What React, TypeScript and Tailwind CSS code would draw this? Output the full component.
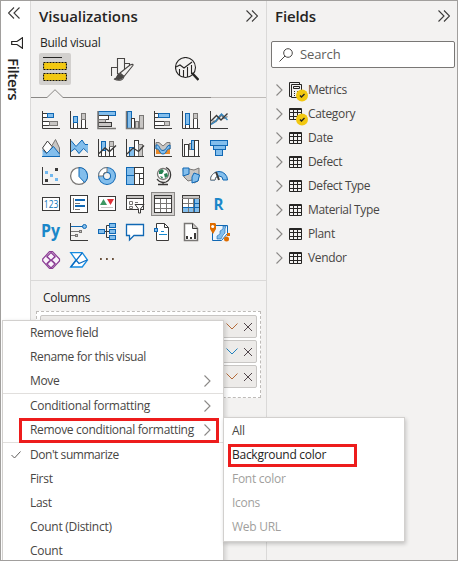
import React from "react";

const D = "#3b3a39";
const B = "#1068b4";
const L = "#83beec";
const G = "#c8c6c4";
const M = "#797775";

function Axis() {
  return <path d="M.5 0V17.5H18" fill="none" stroke={D} />;
}

type ShapeProps = { x: number; y: number; w: number; h: number; f?: string; s?: string };
function Box({ x, y, w, h, f = "#fff", s = D }: ShapeProps) {
  return <rect x={x} y={y} width={w} height={h} fill={f} stroke={s} />;
}

const visuals: { name: string; art: React.ReactNode }[] = [
  { name: "stacked bar", art: <><Box x={0.5} y={2.5} w={5} h={4} /><Box x={5.5} y={2.5} w={6} h={4} f={L} s={B} /><Box x={0.5} y={10.5} w={7} h={4} /><Box x={7.5} y={10.5} w={8} h={4} f={G} s={M} /><Axis /></> },
  { name: "stacked column", art: <><Box x={3.5} y={11.5} w={4} h={6} /><Box x={3.5} y={5.5} w={4} h={6} f={L} s={B} /><Box x={11.5} y={8.5} w={4} h={9} /><Box x={11.5} y={2.5} w={4} h={6} f={G} s={M} /><Axis /></> },
  { name: "clustered bar", art: <><Box x={0.5} y={0.5} w={17} h={4} f={L} s={B} /><Box x={0.5} y={4.5} w={10} h={4} /><Box x={0.5} y={8.5} w={7} h={3} f={G} s={M} /><Box x={0.5} y={11.5} w={13} h={4} f={G} /><path d="M0 0V17.5H18" fill="none" stroke={M} strokeWidth="1.5" /></> },
  { name: "clustered column", art: <><Box x={1.5} y={0.5} w={4} h={17} f={L} s={B} /><Box x={5.5} y={7.5} w={3} h={10} /><Box x={9.5} y={10.5} w={3} h={7} f={G} s={M} /><Box x={13.5} y={4.5} w={4} h={13} f={G} s={M} /><path d="M.5 0V17.5H18" fill="none" stroke={M} strokeWidth="1.5" /></> },
  { name: "100% stacked bar", art: <><Box x={0.5} y={2.5} w={4} h={4} /><Box x={4.5} y={2.5} w={11} h={4} f={L} s={B} /><Box x={0.5} y={10.5} w={10} h={4} /><Box x={10.5} y={10.5} w={5} h={4} f={G} s={M} /><Axis /></> },
  { name: "100% stacked column", art: <><Box x={3.5} y={13.5} w={4} h={4} /><Box x={3.5} y={2.5} w={4} h={11} f={L} s={B} /><Box x={11.5} y={7.5} w={4} h={10} /><Box x={11.5} y={2.5} w={4} h={5} f={G} s={M} /><Axis /></> },
  { name: "line", art: <><path d="M1 13 4 10 6 10.5 11.5 4 14 7.5 17.5 5.5" fill="none" stroke={M} strokeWidth="1.3" /><path d="M1 13.5 5 11 8 7 11.5 3 17.5 9" fill="none" stroke="#3183bd" strokeWidth="1.4" /><path d="M1 10 6.5 4.5 11 9 17.5 2.5" fill="none" stroke={D} strokeWidth="1.4" /><Axis /></> },
  { name: "area", art: <><path d="M8.500 9 13.500.5 17.500 9V17H8Z" fill={G} stroke={M} /><path d="M.5 9 5.500 2 10.500 8 5 14.500Z" fill="#fff" stroke={D} /><path d="M.5 17.500V11L4.500 15 11.500 7.500 17.500 15V17.500Z" fill={L} stroke="none" /><path d="M.5 11 4.500 14.500 11.500 7.500 17.500 15" fill="none" stroke={B} /><path d="M0 17.500H18" stroke={B} /></> },
  { name: "stacked area", art: <><path d="M1 1.500 6 7.500 12 1 15 5.500H18V12.500L13.500 9.500 9 15 5 9.500 1 13Z" fill={L} /><path d="M1 1.500 6 7.500 12 1 15 5.500H18M1 12.500 5 9.500 9 14.500 13.500 9.500 18 13.500" fill="none" stroke={B} /><Axis /></> },
  { name: "line and stacked column", art: <><Box x={3.5} y={11.5} w={4} h={6} /><Box x={3.5} y={2.5} w={4} h={9} f={L} s={B} /><Box x={11.5} y={7.5} w={4} h={10} /><Box x={11.5} y={2.5} w={4} h={5} f={G} s={M} /><path d="M1 14.500 7 9 11.500 12.500 18 6.500" fill="none" stroke={D} strokeWidth="1.400" /><Axis /></> },
  { name: "line and clustered column", art: <><Box x={3.5} y={8.5} w={5} h={9} f={L} s={B} /><Box x={8.5} y={1.5} w={4} h={16} /><Box x={12.5} y={5.5} w={4} h={12} f={G} s={M} /><path d="M1 15 7 9 12.500 12.500 18 6.500" fill="none" stroke={D} strokeWidth="1.300" /><Axis /></> },
  { name: "ribbon", art: <><path d="M2 3.500H5L9 7 13 3.500H16V10H13L9 13.500 5 10H2Z" fill={G} stroke={M} /><path d="M2 10H5L9 12 13 10H16V15H2Z" fill="#e98b2c" /><path d="M2 6C6 5 5 11.500 9 11.500S12 6 16 6V10C12 9 13 15 9 15S6 9 2 10Z" fill={L} stroke={B} /><Axis /></> },
  { name: "waterfall", art: <><Box x={2.5} y={5.5} w={4} h={12} /><Box x={7.5} y={4.5} w={3} h={6} f={G} s={M} /><Box x={9.5} y={1.5} w={3} h={9} f={L} s={B} /><Box x={12.5} y={1.5} w={4} h={16} /><Axis /></> },
  { name: "funnel", art: <><Box x={0.5} y={1.5} w={17} h={5} f={L} s={B} /><Box x={3.5} y={6.5} w={12} h={4} f={L} s={B} /><Box x={5.5} y={10.5} w={7} h={6} f={L} s={B} /></> },
  { name: "scatter", art: <><path d="M3 4h3v3H3zM8 7h3v3H8zM13 11h3v3h-3z" fill="#71b8ef" /><path d="M13 1h3v3h-3zM3 12h3v3H3z" fill={D} /><Axis /></> },
  { name: "pie", art: <><circle cx="9" cy="9" r="8.400" fill="#fff" stroke={M} strokeWidth="1.300" /><path d="M9 .6A8.400 8.400 0 0 1 14.500 15.400L9 9.500Z" fill={L} stroke={B} /></> },
  { name: "donut", art: <><circle cx="9" cy="9" r="6" fill="none" stroke={B} strokeWidth="6" /><circle cx="9" cy="9" r="6" fill="none" stroke={L} strokeWidth="4" /><path d="M9 .5A8.500 8.500 0 0 0 .5 9H5A4 4 0 0 1 9 5Z" fill="#fff" stroke={M} /></> },
  { name: "treemap", art: <><Box x={0.5} y={0.5} w={8} h={8} f={L} s={B} /><Box x={0.5} y={8.5} w={8} h={9} f={L} s={B} /><Box x={8.5} y={0.5} w={9} h={6} /><Box x={8.5} y={6.5} w={5} h={11} /><Box x={13.5} y={6.5} w={4} h={5} /><Box x={13.5} y={11.5} w={4} h={6} /></> },
  { name: "map", art: <><circle cx="9" cy="7" r="5.500" fill="#fff" stroke={M} strokeWidth="1.300" /><path d="m5 4 3-2 2 2-2 3H5ZM10 7l3-1 1 3-3 2ZM6 9l3 1-1 2Z" fill="#268151" /><path d="M12 .5A8 8 0 0 1 12 15 8 8 0 0 1 3 12M9 15v2M4 17.500h10" fill="none" stroke={D} strokeWidth="1.300" /></> },
  { name: "filled map", art: <><path d="M1 1.500 7 2 12 3 17 1V8L16 14 12 16 10 13 6 14 2 10Z" fill={G} stroke={M} /><path d="M1 1H7V7L1 9ZM12 6 17.500 8 16 14 10 16V10Z" fill={L} stroke={B} /></> },
  { name: "gauge", art: <><path d="M.5 13A8.500 8.500 0 0 1 17.500 13H13A4 4 0 0 0 5 13Z" fill={L} stroke={B} /><path d="M.5 13A8.500 8.500 0 0 1 6 5.200L8 9A4 4 0 0 0 5 13Z" fill="#fff" stroke={M} /><path d="M9 13 6 5" stroke={D} strokeWidth="2" /></> },
  { name: "card", art: <><Box x={0.5} y={2.5} w={17} h={13} /><text x="1.800" y="12.800" textLength="14.500" lengthAdjust="spacingAndGlyphs" fontSize="10.500" fontWeight="500" fill="#1078b8">123</text></> },
  { name: "multi-row card", art: <><Box x={0.5} y={0.5} w={17} h={17} /><path d="M3.500 3v12" stroke={M} /><path d="M5 5h10M5 11h10" stroke={B} strokeWidth="2" /><path d="M5 8.500h5M5 14.500h5" stroke={M} /></> },
  { name: "kpi", art: <><Box x={0.5} y={1.5} w={17} h={14} /><path d="M2 10 5.500 4 9 10Z" fill="#3c9862" /><path d="M9 4h7l-3.500 6Z" fill="#e02f36" /><path d="M3 12.500h12" stroke={G} /></> },
  { name: "slicer", art: <><Box x={0.5} y={0.5} w={17} h={14} /><path d="M1 1h16v3H1z" fill={G} /><path d="M0 3.500h18" stroke={D} /><path d="M3.500 6.500h3v3h-3zM3.500 11.500h3v2h-3zM9 7.500h3" fill="none" stroke={M} /><path d="M9 9.500h9L14.500 14v4h-2v-4Z" fill="#fff" stroke={D} /></> },
  { name: "table", art: <><Box x={0.5} y={0.5} w={17} h={17} /><path d="M1 1h16v3H1z" fill={G} /><path d="M0 3.500h18" stroke={D} /><path d="M6.500 4v13M12.500 4v13M1 8.500h16M1 13.500h16" stroke={M} /></> },
  { name: "matrix", art: <><Box x={0.5} y={0.5} w={17} h={17} /><path d="M12 4h5v13H1v-4h11Z" fill={L} /><path d="M1 1h16v3H1z" fill={G} /><path d="M0 3.500h18M6.500 4v13M11.500 4v13M1 8.500h16M1 12.500h16" stroke={M} /><path d="M12.500 4v13M12 8.500h5M1 12.500h16" stroke={B} /></> },
  { name: "r script", art: <text x="3.500" y="14.500" textLength="10" lengthAdjust="spacingAndGlyphs" fontSize="16" fontWeight="700" fill="#1b87c9">R</text> },
  { name: "python script", art: <text x="-1" y="13.500" textLength="19" lengthAdjust="spacingAndGlyphs" fontSize="17" fontWeight="700" fill="#1b87c9">Py</text> },
  { name: "key influencers", art: <><path d="M1 3.500h12" stroke={B} /><circle cx="14.500" cy="3.500" r="2" fill={L} stroke={B} /><path d="M1 8.500h8M1 12.500h4" stroke={M} /><Box x={9.5} y={7.5} w={2} h={2} f={G} s={M} /><Box x={5.5} y={11.500} w={2} h={2} f={G} s={M} /><Axis /></> },
  { name: "decomposition tree", art: <><path d="M6 8.500h5M8.500 2.500v12M8.500 2.500h3M8.500 14.500h3" stroke={D} fill="none" /><Box x={0.5} y={6.5} w={6} h={4} f={L} s={B} /><Box x={11.500} y={0.5} w={6} h={4} f={L} s={B} /><Box x={11.500} y={6.5} w={6} h={4} f={L} s={B} /><Box x={11.500} y={12.500} w={6} h={4} f={L} s={B} /></> },
  { name: "q and a", art: <path d="M.5 1.500h17v11H8L3.500 17v-4.500h-3Z" fill="#fff" stroke={B} strokeWidth="1.300" /> },
  { name: "smart narrative", art: <><path d="M2.500.5h8l4 4v13h-12Z" fill="#fff" stroke={D} /><path d="M10.500.5v4h4" fill="none" stroke={D} /><Box x={0.5} y={5.5} w={3} h={3} f={L} s={B} /><path d="M7 8.500h3M5 11.500h8" stroke="#168ad0" /></> },
  { name: "paginated report", art: <><path d="M2.500.5h8l5 5v12h-13Z" fill="#fff" stroke={M} strokeWidth="1.500" /><path d="M10.500.5v5h5" fill={G} stroke={D} /><path d="M4 13h2v3H4zM8 14h2v2H8zM12 10h2v6h-2z" fill={D} /></> },
  { name: "arcgis map", art: <><path d="M2.500 2.500h15v8l-6 7h-9Z" fill="#eff6fc" stroke={B} /><path d="M16 3h-3v3l-3 2v3l-3 2v3h4l2-4 2-2V6Z" fill={L} stroke={B} strokeWidth=".6" /><path d="M0 0h5l1 1v5l-3 5-3-5Z" fill="#df6d00" /><circle cx="2.700" cy="3.500" r="1.500" fill="#fff" /><circle cx="16.500" cy="16" r="2.500" fill="#df6d00" /><path d="M17 10h3v3h-3z" fill="#df6d00" /></> },
  { name: "power apps", art: <g fill="none" stroke="#8b3d94" strokeWidth="1.200"><path d="M7.500.7h3L17.500 8v2l-7 7.300h-3L.7 10V8Z" fill="#faf3fb" /><path d="m9 1.500 4 4L9 9.500l-4-4ZM4.500 5.500l4 3.500-4 4M13.500 5.500 9.500 9l4 4M9 9l4 4-4 4-4-4Z" /></g> },
  { name: "power automate", art: <g fill="none" stroke="#168be0" strokeWidth="1.300"><path d="M.7 1.600h11.500l5.300 7.400-5.300 7H.7L6 9Z" fill="#fff" /><path d="m.7 16 11.500-14M6 9l3 3.500L17 9" stroke="#0c6bc0" /></g> },
  { name: "more", art: <path d="M2 7h1.800v2H2zM8 7h1.800v2H8zM14 7h1.800v2H14z" fill="#69513c" /> },
];

function DoubleChevron({ left = false }: { left?: boolean }) {
  return (
    <svg className={left ? "h-3 w-3 rotate-180" : "h-3 w-3"} viewBox="0 0 12 12" fill="none" stroke="#3b3a39" strokeWidth="1.100">
      <path d="m.5.5 5.500 5.500L.5 11.500M6 .5 11.500 6 6 11.500" />
    </svg>
  );
}

function Chevron({ className = "" }: { className?: string }) {
  return (
    <svg className={`h-3 w-[7px] shrink-0 ${className}`} viewBox="0 0 7 12" fill="none" stroke="#8a8886" strokeWidth="1.100">
      <path d="m.5.5 5.500 5.500L.5 11.500" />
    </svg>
  );
}

function TableIcon({ metrics = false, checked = false }: { metrics?: boolean; checked?: boolean }) {
  return (
    <svg className="ml-[6px] h-[14px] w-[14px] shrink-0 overflow-visible" viewBox="0 0 14 14" fill="none" stroke="#252423">
      {metrics ? (
        <><path d="M2.500 13.500H.5V-.5h10V1" /><path d="M2.500 1.500h10v13h-10zM4.500 3.500h6v2h-6zM5 8.500h1M8 8.500h1M5 10.500h1M8 10.500h1M5 12.500h1" /></>
      ) : (
        <path d="M.5 1.500h12v11H.5ZM.5 2.500h12M.5 5.500h12M.5 9.500h12M4.500 3v9M8.500 3v9" />
      )}
      {checked && <><circle cx="13" cy="12.500" r="6" fill="#f2c811" stroke="none" /><path d="m11 12.500 1.500 1.500 3-3" strokeWidth="1.400" /></>}
    </svg>
  );
}

const fields = ["Metrics", "Category", "Date", "Defect", "Defect Type", "Material Type", "Plant", "Vendor"];

type RowProps = { text: string; arrow?: boolean; checked?: boolean; spacing?: string };
function MenuRow({ text, arrow, checked, spacing = "tracking-[-0.35px]" }: RowProps) {
  return (
    <div className="flex h-6 shrink-0 items-center pr-3">
      <div className="flex w-[27px] shrink-0 pl-2">
        {checked && <svg className="h-2 w-[10px]" viewBox="0 0 10 8" fill="none" stroke="#605e5c"><path d="m.5 4 3 3 6-6.500" /></svg>}
      </div>
      <span className={`grow whitespace-nowrap ${spacing}`}>{text}</span>
      {arrow && <Chevron />}
    </div>
  );
}

export default function App() {
  return (
    <div className="relative flex h-[561px] w-[458px] overflow-hidden border border-[#a19f9d] bg-[#f3f2f1] font-['Open_Sans','Noto_Sans',sans-serif] text-xs text-[#484644]">
      <aside className="flex w-[30px] shrink-0 flex-col items-center border-r border-[#dad9d8] bg-white pr-[3px] pt-[6px]">
        <DoubleChevron left />
        <svg className="mt-[18px] ml-[5px] h-3 w-3" viewBox="0 0 12 12" fill="none" stroke="#252423" strokeWidth="1.200"><path d="M11.500.7v10.600L6 7.500H.7v-3H6Z" /></svg>
        <span className="mt-[9px] text-[15px] leading-[22px] font-semibold tracking-[-0.35px] text-[#252423] [writing-mode:vertical-rl]">Filters</span>
      </aside>

      <main className="flex w-[236px] shrink-0 flex-col border-r border-[#dad9d8]">
        <header className="flex h-[29px] items-center justify-between pl-2 pr-[8px] text-[#252423]">
          <h1 className="text-[15px] leading-5 font-semibold tracking-[-0.05px]">Visualizations</h1>
          <DoubleChevron />
        </header>
        <h2 className="ml-[9px] mt-1 h-[19px] leading-[17px] font-medium tracking-[-0.25px] text-[#252423]">Build visual</h2>
        <div className="flex h-8 items-center pl-2">
          <div className="flex h-8 w-8 items-center justify-center rounded-[2px] bg-[#d2d0ce]">
            <svg className="h-6 w-6" viewBox="0 0 24 24"><path d="M0 .5h19" stroke="#252423" /><path d="M.5 5.500h23v7H.5zM.5 16.500h23v7H.5z" fill="#f2c811" stroke="#111" strokeWidth="1.200" strokeDasharray="2 1" /></svg>
          </div>
          <svg className="ml-10 h-6 w-6" viewBox="0 0 24 24" fill="none" stroke="#484644" strokeWidth="1.100">
            <path d="M.5 19V10.500H6M6.500 17V1.500h7V12M13.500 6.500h5v2" />
            <path d="m9 16 10-8c2-1 4-1 2.500 1L13 19.500ZM9 16c-3 0-2 6-6 6 4 2 9 2 10-2.500Z" fill="#f3f2f1" />
            <path d="M8 17c-2 1-1 4-3 5 3 1 7 0 7-3Z" fill="#484644" />
          </svg>
          <svg className="ml-10 h-6 w-6" viewBox="0 0 24 24" fill="none" stroke="#252423" strokeWidth="1.100">
            <circle cx="10.500" cy="10.500" r="10" /><path d="M1 10 5 8l4 3 4-3 4-3M4.500 12v6M8.500 13v7M12.500 10v10M16.500 8v9" /><path d="m17 16 6.500 7" strokeWidth="2.500" />
          </svg>
        </div>
        <svg className="mt-1 h-2.5 w-full" viewBox="0 0 235 10" fill="none"><path d="M180 8.500h55" stroke="#bebbb8" /><path d="M0 8.500h16L24 .7l8 7.800h148" stroke="#8a8886" /></svg>
        <div className="mt-[7px] grid w-[196px] grid-cols-[repeat(7,28px)] auto-rows-[28px] ml-[6px]">
          {visuals.map((v) => (
            <button key={v.name} aria-label={v.name} className={v.name === "table" ? "m-0.5 flex items-center justify-center border border-[#8a8886] bg-[#d2d0ce]" : "flex items-center justify-center"}>
              <svg className="h-[18px] w-[18px] shrink-0 overflow-visible" viewBox="0 0 18 18">{v.art}</svg>
            </button>
          ))}
        </div>
        <section className="mt-[6px] flex flex-col border-t border-[#dad9d8] pl-[5px]">
          <h3 className="mt-[7px] ml-[7px] h-[23px] leading-5 tracking-[-0.3px] text-[#252423]">Columns</h3>
          <div className="flex h-[87px] w-[225px] flex-col gap-[2px] border border-dashed border-[#bebbb8] bg-white p-[3px]">
            {[0, 1, 2].map((n) => (
              <div key={n} className="flex h-[23px] shrink-0 items-center justify-end gap-[6px] rounded-[2px] border border-[#c8c6c4] bg-[#edebe9] pr-1">
                <svg className="h-[7px] w-3" viewBox="0 0 12 7" fill="none" stroke={n === 1 ? "#2382bd" : "#b36a38"}><path d="m.5.5 5.500 5.500L11.500.5" /></svg>
                <svg className="h-2 w-2" viewBox="0 0 8 8" stroke="#51464b"><path d="m0 0 8 8M8 0 0 8" /></svg>
              </div>
            ))}
          </div>
        </section>
      </main>

      <aside className="flex min-w-0 flex-1 flex-col">
        <header className="flex h-[29px] items-center justify-between pl-[8px] pr-[7px] text-[#252423]">
          <h1 className="text-[15px] leading-5 font-semibold tracking-[-0.1px]">Fields</h1>
          <DoubleChevron />
        </header>
        <div className="ml-1 mr-0.5 mt-[11px] flex h-[27px] items-center rounded-[2px] border border-[#797775] bg-white pl-[7px]">
          <svg className="h-[14px] w-[14px]" viewBox="0 0 14 14" fill="none" stroke="#484644"><circle cx="9" cy="5" r="4.300" /><path d="m6 8-5.500 5.500" /></svg>
          <span className="ml-[7px] text-[13px] tracking-[-0.1px] text-[#605e5c]">Search</span>
        </div>
        <div className="mt-[10px]">
          {fields.map((name, i) => (
            <div key={name} className="flex h-6 items-center pl-[9px]">
              <Chevron />
              <TableIcon metrics={i === 0} checked={i < 2} />
              <span className="ml-[5px] tracking-[-0.35px]">{name}</span>
            </div>
          ))}
        </div>
      </aside>

      <div className="absolute top-[319px] left-[1px] flex h-[245px] w-[222px] flex-col border border-[#d2d0ce] bg-white shadow-[2px_1px_4px_#0002]">
        <MenuRow text="Remove field" />
        <MenuRow text="Rename for this visual" />
        <MenuRow text="Move" arrow />
        <hr className="shrink-0 border-[#e1dfdd]" />
        <MenuRow text="Conditional formatting" arrow spacing="tracking-[-0.3px]" />
        <MenuRow text="Remove conditional formatting" arrow spacing="tracking-[-0.32px]" />
        <hr className="shrink-0 border-[#e1dfdd]" />
        <MenuRow text="Don't summarize" checked spacing="tracking-[-0.45px]" />
        <MenuRow text="First" spacing="tracking-[-0.3px]" />
        <MenuRow text="Last" spacing="tracking-[-0.3px]" />
        <MenuRow text="Count (Distinct)" spacing="tracking-[-0.28px]" />
        <MenuRow text="Count" spacing="tracking-[-0.28px]" />
      </div>
      <div className="absolute top-[416px] left-[222px] flex h-[125px] w-[182px] flex-col border border-[#d2d0ce] bg-white pt-px pl-[8px] leading-6 tracking-[-0.27px] text-[#a19f9d] shadow-[1px_2px_4px_#0003]">
        <span className="text-[#484644]">All</span>
        <span className="text-[#252423]">Background color</span>
        <span>Font color</span>
        <span>Icons</span>
        <span>Web URL</span>
      </div>
      <div className="absolute top-[417px] left-[18px] h-[25px] w-[200px] border-[3px] border-[#ed1c1c]" />
      <div className="absolute top-[443px] left-[227px] h-[23px] w-[129px] border-[3px] border-[#ed1c1c]" />
    </div>
  );
}
